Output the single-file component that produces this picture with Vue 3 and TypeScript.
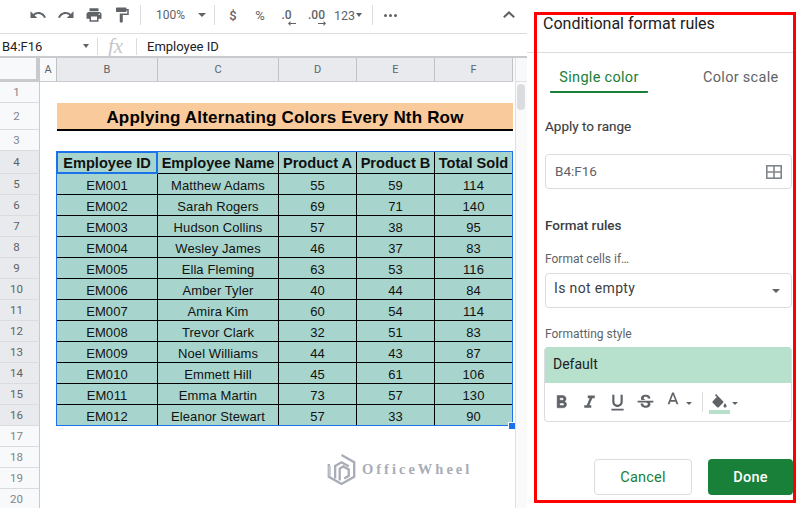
<script setup lang="ts">
interface Emp { id: string; name: string; a: number; b: number; t: number }
const employees: Emp[] = [
  { id: 'EM001', name: 'Matthew Adams', a: 55, b: 59, t: 114 },
  { id: 'EM002', name: 'Sarah Rogers', a: 69, b: 71, t: 140 },
  { id: 'EM003', name: 'Hudson Collins', a: 57, b: 38, t: 95 },
  { id: 'EM004', name: 'Wesley James', a: 46, b: 37, t: 83 },
  { id: 'EM005', name: 'Ella Fleming', a: 63, b: 53, t: 116 },
  { id: 'EM006', name: 'Amber Tyler', a: 40, b: 44, t: 84 },
  { id: 'EM007', name: 'Amira Kim', a: 60, b: 54, t: 114 },
  { id: 'EM008', name: 'Trevor Clark', a: 32, b: 51, t: 83 },
  { id: 'EM009', name: 'Noel Williams', a: 44, b: 43, t: 87 },
  { id: 'EM010', name: 'Emmett Hill', a: 45, b: 61, t: 106 },
  { id: 'EM011', name: 'Emma Martin', a: 73, b: 57, t: 130 },
  { id: 'EM012', name: 'Eleanor Stewart', a: 57, b: 33, t: 90 },
]
const columns = ['B', 'C', 'D', 'E', 'F']
const tail = [17, 18, 19, 20]
</script>

<template>
  <div class="app">
    <div class="left">
      <div class="toolbar">
        <button class="tb">
          <svg viewBox="0 0 24 24" class="ic"><path d="M12.5 8c-2.65 0-5.05.99-6.9 2.6L2 7v9h9l-3.62-3.62c1.39-1.16 3.16-1.88 5.12-1.88 3.54 0 6.55 2.31 7.6 5.5l2.37-.78C21.08 11.03 17.15 8 12.5 8z" /></svg>
        </button>
        <button class="tb">
          <svg viewBox="0 0 24 24" class="ic"><path d="M18.4 10.6C16.55 8.99 14.15 8 11.5 8c-4.65 0-8.58 3.03-9.96 7.22L3.9 16c1.05-3.19 4.05-5.5 7.6-5.5 1.95 0 3.73.72 5.12 1.88L13 16h9V7l-3.6 3.6z" /></svg>
        </button>
        <button class="tb">
          <svg viewBox="0 0 24 24" class="ic"><path d="M19 8H5c-1.66 0-3 1.34-3 3v6h4v4h12v-4h4v-6c0-1.66-1.34-3-3-3zm-3 11H8v-5h8v5zm3-7c-.55 0-1-.45-1-1s.45-1 1-1 1 .45 1 1-.45 1-1 1zm-1-9H6v4h12V3z" /></svg>
        </button>
        <button class="tb">
          <svg viewBox="0 0 24 24" class="ic"><path d="M18 4V3c0-.55-.45-1-1-1H5c-.55 0-1 .45-1 1v4c0 .55.45 1 1 1h12c.55 0 1-.45 1-1V6h1v4H9v11c0 .55.45 1 1 1h2c.55 0 1-.45 1-1v-9h8V4h-3z" /></svg>
        </button>
        <span class="sep first"></span>
        <span class="zoom">100%</span>
        <span class="caret zoom-caret"></span>
        <span class="sep zoom-sep"></span>
        <span class="sym dollar">$</span>
        <span class="sym pct">%</span>
        <span class="dec dec1">.0<svg viewBox="0 0 10 6" class="arrow"><path d="M10 2.4H3V0L0 3l3 3V3.6h7z" /></svg></span>
        <span class="dec dec2">.00<svg viewBox="0 0 10 6" class="arrow"><path d="M0 2.4h7V0l3 3-3 3V3.6H0z" /></svg></span>
        <span class="num">123</span>
        <span class="caret num-caret"></span>
        <span class="sep num-sep"></span>
        <span class="dots"><i></i><i></i><i></i></span>
        <svg viewBox="0 0 12 7" class="chev"><path d="M.8 6.2 6 1.4l5.2 4.8" fill="none" stroke="#5f6368" stroke-width="2" /></svg>
      </div>

      <div class="formula">
        <span class="namebox">B4:F16</span>
        <span class="caret name-caret"></span>
        <span class="fsep"></span>
        <span class="fx">fx</span>
        <span class="fsep"></span>
        <span class="fval">Employee ID</span>
      </div>

      <div class="sheet">
        <div class="grid">
          <div class="row head-row">
            <div class="corner"></div>
            <div class="ch ca light">A</div>
            <div v-for="(c, i) in columns" :key="c" class="ch" :class="'c' + i">{{ c }}</div>
          </div>

          <div class="row h21">
            <div class="rn">1</div>
          </div>
          <div class="row h27">
            <div class="rn">2</div>
            <div class="ca"></div>
            <div class="banner">Applying Alternating Colors Every Nth Row</div>
          </div>
          <div class="row h21">
            <div class="rn">3</div>
          </div>
          <div class="row h23">
            <div class="rn sel">4</div>
            <div class="ca"></div>
            <div class="td th c0">Employee ID</div>
            <div class="td th c1">Employee Name</div>
            <div class="td th c2">Product A</div>
            <div class="td th c3">Product B</div>
            <div class="td th c4">Total Sold</div>
          </div>
          <div v-for="(e, i) in employees" :key="e.id" class="row h21">
            <div class="rn sel">{{ i + 5 }}</div>
            <div class="ca"></div>
            <div class="td c0">{{ e.id }}</div>
            <div class="td c1">{{ e.name }}</div>
            <div class="td c2">{{ e.a }}</div>
            <div class="td c3">{{ e.b }}</div>
            <div class="td c4">{{ e.t }}</div>
          </div>
          <div v-for="n in tail" :key="n" class="row h21">
            <div class="rn">{{ n }}</div>
          </div>

          <div class="selection"></div>
          <div class="active"></div>
          <div class="handle"></div>

          <div class="watermark">
            <svg viewBox="0 0 32 36" class="wm-logo" fill="none" stroke="#a9adb8" stroke-width="2.6">
              <path d="M16 2 30 10v16l-14 8-14-8V12" />
              <path d="M9 28V14l7-4 8 4.5" />
              <path d="M14 30V17l4-2.4 6 3.4v7l-5 3" />
              <path d="M3 14v11" stroke="#c4c7ce" />
            </svg>
            <span class="wm-text">OfficeWheel</span>
          </div>
        </div>
        <div class="scroll">
          <div class="scroll-head"></div>
          <div class="thumb"></div>
        </div>
      </div>
    </div>

    <aside class="panel">
      <div class="title">Conditional format rules</div>
      <div class="tabs">
        <div class="tab on">Single color</div>
        <div class="tab off">Color scale</div>
      </div>

      <div class="h-range">Apply to range</div>
      <div class="field range">
        <span class="range-text">B4:F16</span>
        <svg viewBox="0 0 16 14" class="gridic" fill="none" stroke="#80868b" stroke-width="1.6">
          <rect x="0.8" y="0.8" width="14.4" height="12.4" />
          <path d="M8 1v12M1 7h14" />
        </svg>
      </div>

      <div class="h-rules">Format rules</div>
      <div class="lbl cells-if">Format cells if…</div>
      <div class="field select">
        <span class="sel-text">Is not empty</span>
        <span class="caret sel-caret"></span>
      </div>

      <div class="lbl style-lbl">Formatting style</div>
      <div class="style-box">
        <div class="preview">Default</div>
        <div class="style-tools">
          <svg viewBox="0 0 24 24" class="st b"><path d="M15.6 10.79c.97-.67 1.65-1.77 1.65-2.79 0-2.26-1.75-4-4-4H7v14h7.04c2.09 0 3.71-1.7 3.71-3.79 0-1.52-.86-2.82-2.15-3.42zM10 6.5h3c.83 0 1.5.67 1.5 1.5s-.67 1.5-1.5 1.5h-3v-3zm3.5 9H10v-3h3.5c.83 0 1.5.67 1.5 1.5s-.67 1.5-1.5 1.5z" /></svg>
          <svg viewBox="0 0 24 24" class="st"><path d="M10 4v3h2.21l-3.42 8H6v3h8v-3h-2.21l3.42-8H18V4z" /></svg>
          <svg viewBox="0 0 24 24" class="st"><path d="M12 17c3.31 0 6-2.69 6-6V3h-2.5v8c0 1.93-1.57 3.5-3.5 3.5S8.5 12.93 8.5 11V3H6v8c0 3.31 2.69 6 6 6zm-7 2v2h14v-2H5z" /></svg>
          <svg viewBox="0 0 24 24" class="st"><path d="M7.24 8.75c-.26-.48-.39-1.03-.39-1.67 0-.61.13-1.16.4-1.67.26-.5.63-.93 1.11-1.29.48-.35 1.05-.63 1.7-.83.66-.19 1.39-.29 2.18-.29.81 0 1.54.11 2.21.34.66.22 1.23.54 1.69.94.47.4.83.88 1.08 1.43.25.55.38 1.15.38 1.81h-3.01c0-.31-.05-.59-.15-.85-.09-.27-.24-.49-.44-.68-.2-.19-.45-.33-.75-.44-.3-.1-.66-.16-1.06-.16-.39 0-.74.04-1.03.13-.29.09-.53.21-.72.36-.19.16-.34.34-.44.55-.1.21-.15.43-.15.66 0 .48.25.88.74 1.21.38.25.77.48 1.41.7H7.39c-.05-.08-.11-.17-.15-.25zM21 12v-2H3v2h9.62c.18.07.4.14.55.2.37.17.66.34.87.51.21.17.35.36.43.57.07.2.11.43.11.69 0 .23-.05.45-.14.66-.09.2-.23.38-.42.53-.19.15-.42.26-.71.35-.29.08-.63.13-1.01.13-.43 0-.83-.04-1.18-.13s-.66-.23-.91-.42c-.25-.19-.45-.44-.59-.75-.14-.31-.25-.76-.25-1.21H6.4c0 .55.08 1.13.24 1.58.16.45.37.85.65 1.21.28.35.6.66.98.92.37.26.78.48 1.22.65.44.17.9.3 1.38.39.48.08.96.13 1.44.13.8 0 1.53-.09 2.18-.28s1.21-.45 1.67-.79c.46-.34.82-.77 1.07-1.27s.38-1.07.38-1.71c0-.6-.1-1.14-.31-1.61-.05-.11-.11-.23-.17-.33H21z" /></svg>
          <svg viewBox="0 0 24 24" class="st tc"><path d="M11 3L5.5 17h2.25l1.12-3h6.25l1.12 3h2.25L13 3h-2zm-1.38 9L12 5.67 14.38 12H9.62z" /></svg>
          <span class="caret small tc-caret"></span>
          <span class="vsep"></span>
          <span class="fill">
            <svg viewBox="0 0 24 20" class="st fillic"><path d="M16.56 8.94 7.62 0 6.21 1.41l2.38 2.38-5.15 5.15c-.59.59-.59 1.54 0 2.12l5.5 5.5c.29.29.68.44 1.06.44s.77-.15 1.06-.44l5.5-5.5c.59-.58.59-1.53 0-2.12zM19 11.5s-2 2.17-2 3.5c0 1.1.9 2 2 2s2-.9 2-2c0-1.33-2-3.5-2-3.5z" /></svg>
            <i class="fillbar"></i>
          </span>
          <span class="caret small fill-caret"></span>
        </div>
      </div>

      <div class="actions">
        <button class="btn cancel">Cancel</button>
        <button class="btn done">Done</button>
      </div>

      <div class="redbox"></div>
    </aside>
  </div>
</template>

<style>
html, body { margin: 0; background: #fff; }
</style>

<style scoped>
.app { width: 796px; height: 508px; display: flex; overflow: hidden; background: #fff; font-family: Roboto, "Liberation Sans", sans-serif; }
.left { width: 527px; display: flex; flex-direction: column; }
.toolbar { height: 34px; box-sizing: border-box; border-bottom: 1px solid #dadce0; display: flex; align-items: center; padding: 0 0 3px 24px; color: #5f6368; position: relative; }
.tb { width: 28px; height: 28px; padding: 0; border: 0; background: none; display: flex; align-items: center; justify-content: center; }
.ic { width: 18px; height: 18px; fill: #5f6368; }
.sep { width: 1px; height: 20px; background: #dadce0; flex: none; }
.first { margin-left: 4px; }
.zoom { margin-left: 15px; font-size: 12px; width: 32px; }
.caret { width: 0; height: 0; border-left: 4px solid transparent; border-right: 4px solid transparent; border-top: 4px solid #5f6368; flex: none; }
.caret.small { border-left-width: 3.5px; border-right-width: 3.5px; border-top-width: 3.5px; }
.zoom-caret { margin-left: 10px; }
.zoom-sep { margin-left: 8px; }
.sym { font-size: 13px; font-weight: 500; width: 10px; text-align: center; }
.dollar { margin-left: 13px; }
.pct { margin-left: 17px; font-weight: 400; }
.dec { position: relative; font-size: 12px; font-weight: 500; display: inline-block; line-height: 14px; text-align: center; }
.dec1 { margin-left: 16px; width: 11px; }
.dec2 { margin-left: 16px; width: 17px; }
.arrow { position: absolute; width: 8px; height: 5px; fill: #5f6368; bottom: -4px; }
.dec1 .arrow { right: -4px; }
.dec2 .arrow { right: -1px; }
.num { margin-left: 9px; font-size: 12.5px; width: 20px; }
.num-caret { margin-left: 2px; border-left-width: 3.5px; border-right-width: 3.5px; }
.num-sep { margin-left: 10px; }
.dots { margin-left: 11px; display: flex; gap: 2px; }
.dots i { width: 3px; height: 3px; border-radius: 50%; background: #5f6368; }
.chev { position: absolute; left: 503px; top: 11px; width: 12px; height: 7px; }

.formula { height: 24px; box-sizing: border-box; border-bottom: 2px solid #c8cacd; display: flex; align-items: center; padding-top: 2px; color: #3c4043; }
.namebox { font-size: 13px; width: 83px; padding-left: 2px; box-sizing: border-box; color: #202124; }
.name-caret { border-left-width: 3.5px; border-right-width: 3.5px; }
.fsep { width: 1px; height: 17px; background: #dadce0; margin-left: 8px; flex: none; }
.formula .fx { margin-left: 10px; font-family: "Liberation Serif", serif; font-style: italic; font-size: 21px; color: #c4c6c9; width: 20px; line-height: 20px; }
.fval { margin-left: 10px; font-size: 13px; color: #202124; }

.sheet { flex: 1; display: flex; min-height: 0; }
.grid { width: 515px; position: relative; overflow: hidden; font-family: "Liberation Sans", Arial, sans-serif; }
.row { display: flex; }
.head-row { height: 24px; box-sizing: border-box; background: #f8f9fa; }
.h21 { height: 21px; }
.h23 { height: 23px; }
.h27 { height: 27px; }
.corner { width: 40px; height: 24px; flex: none; box-sizing: border-box; background: #f8f9fa; border-right: 4px solid #c8cacd; border-bottom: 3px solid #c8cacd; }
.ch { flex: none; box-sizing: border-box; background: #e8eaed; color: #5f6368; border-right: 1px solid #c0c2c5; border-bottom: 1px solid #c8cacd; font-family: Roboto, sans-serif; font-size: 11px; display: flex; align-items: center; justify-content: center; }
.ch.light { background: #f8f9fa; }
.rn { width: 40px; flex: none; box-sizing: border-box; background: #f8f9fa; color: #80868b; border-right: 1px solid #c8cacd; border-bottom: 1px solid #dadce0; font-family: Roboto, sans-serif; font-size: 11.5px; display: flex; align-items: center; justify-content: center; padding-right: 6px; }
.rn.sel { background: #e8eaed; color: #5f6368; }
.ca { width: 17px; flex: none; }
.c0 { width: 101px; flex: none; }
.c1 { width: 121px; flex: none; }
.c2, .c3, .c4 { width: 78px; flex: none; }
.banner { width: 456px; height: 28px; box-sizing: border-box; flex: none; background: #f9cb9c; border-bottom: 2px solid #000; color: #000; font-weight: 700; font-size: 17px; letter-spacing: .18px; display: flex; align-items: center; justify-content: center; padding-top: 3px; position: relative; z-index: 1; }
.td { box-sizing: border-box; background: #a7d5ce; color: #111; border-right: 1px solid #000; border-bottom: 1px solid #000; font-size: 13px; letter-spacing: .1px; display: flex; align-items: center; justify-content: center; padding-top: 2px; white-space: nowrap; }
.th { font-weight: 700; font-size: 14.6px; letter-spacing: 0; padding-top: 1px; }
.selection { position: absolute; left: 56px; top: 93px; width: 457px; height: 275px; box-sizing: border-box; border: 1.5px solid #1a73e8; pointer-events: none; }
.active { position: absolute; left: 56px; top: 93px; width: 102px; height: 23px; box-sizing: border-box; border: 2px solid #1a73e8; }
.handle { position: absolute; left: 508px; top: 364px; width: 6px; height: 6px; background: #1a73e8; border: 1px solid #fff; }
.watermark { position: absolute; left: 327px; top: 395px; display: flex; align-items: center; gap: 6px; }
.wm-logo { width: 29px; height: 33px; }
.wm-text { font-family: "Liberation Serif", serif; font-weight: 700; font-size: 14.5px; letter-spacing: 3px; color: #a9adb6; }

.scroll { width: 12px; background: #fafafa; border-left: 1px solid #e0e0e0; box-sizing: border-box; position: relative; }
.scroll-head { height: 24px; background: #f8f9fa; border-bottom: 1px solid #e0e0e0; box-sizing: border-box; }
.thumb { position: absolute; left: 1px; top: 26px; width: 8px; height: 26px; border-radius: 4px; background: #dadce0; }

.panel { flex: 1; position: relative; box-sizing: border-box; display: flex; flex-direction: column; color: #3c4043; }
.title { height: 53px; box-sizing: border-box; border-bottom: 1px solid #dadce0; padding: 14px 0 0 16px; font-size: 16px; line-height: 19px; color: #202124; }
.tabs { display: flex; height: 39px; margin-top: 1px; padding-left: 23px; }
.tab { font-size: 14.5px; line-height: 47px; height: 39px; letter-spacing: .3px; box-sizing: border-box; }
.tab.on { width: 98px; color: #188038; text-align: center; border-bottom: 2px solid #188038; border-radius: 0 0 1px 1px; }
.tab.off { margin-left: 55px; color: #5f6368; }
.h-range { margin: 25px 0 0 18px; font-size: 13.5px; line-height: 16px; color: #3c4043; -webkit-text-stroke: .15px #3c4043; }
.field { margin-left: 18px; width: 247px; height: 35px; box-sizing: border-box; border: 1px solid #dadce0; border-radius: 4px; display: flex; align-items: center; justify-content: space-between; }
.range { margin-top: 20px; padding: 0 9px 0 9px; font-size: 13.5px; color: #5f6368; }
.range-text { padding-bottom: 2px; }
.gridic { width: 16px; height: 14px; }
.h-rules { margin: 28px 0 0 18px; font-size: 13.5px; line-height: 16px; font-weight: 500; color: #3c4043; }
.lbl { margin-left: 18px; font-size: 12px; line-height: 14px; color: #5f6368; }
.cells-if { margin-top: 19px; }
.select { margin-top: 7px; padding: 0 11px 0 8px; font-size: 14px; letter-spacing: .35px; color: #3c4043; }
.sel-text { padding-bottom: 6px; }
.style-lbl { margin-top: 19px; }
.style-box { margin: 6px 0 0 17px; width: 248px; height: 75px; box-sizing: border-box; border: 1px solid #dadce0; border-top: 0; border-radius: 4px; overflow: hidden; }
.preview { height: 36px; background: #b7e1cd; padding-left: 9px; font-size: 14px; line-height: 35px; color: #202124; margin: 0 -1px; }
.style-tools { display: flex; align-items: center; height: 38px; padding-left: 6px; }
.st { width: 21px; height: 21px; fill: #5f6368; flex: none; margin-right: 7px; }
.st.b { stroke: #5f6368; stroke-width: .6; }
.st.tc { width: 20px; height: 20px; margin-right: 3px; margin-top: -4px; }
.tc-caret { margin-top: 3px; }
.vsep { width: 1px; height: 20px; background: #dadce0; margin-left: 10px; flex: none; }
.fill { width: 21px; margin-left: 6px; position: relative; height: 24px; margin-right: 2px; }
.fillic { position: absolute; left: 1px; top: 4px; margin: 0; width: 19px; height: 16px; }
.fillbar { position: absolute; left: 0; bottom: 0; width: 21px; height: 4px; background: #b7e1cd; }
.fill-caret { margin-top: 2px; }
.actions { margin: auto 3px 13px 0; display: flex; justify-content: flex-end; gap: 16px; }
.btn { height: 36px; border-radius: 4px; font-family: Roboto, sans-serif; font-size: 14.5px; padding: 0; box-sizing: border-box; letter-spacing: .2px; }
.cancel { width: 98px; background: #fff; border: 1px solid #dadce0; color: #188038; }
.done { width: 85px; background: #188038; border: 0; color: #fff; font-weight: 500; }
.redbox { position: absolute; left: 7px; top: 12px; width: 262px; height: 491px; box-sizing: border-box; border: 3px solid #f00; pointer-events: none; }
</style>
